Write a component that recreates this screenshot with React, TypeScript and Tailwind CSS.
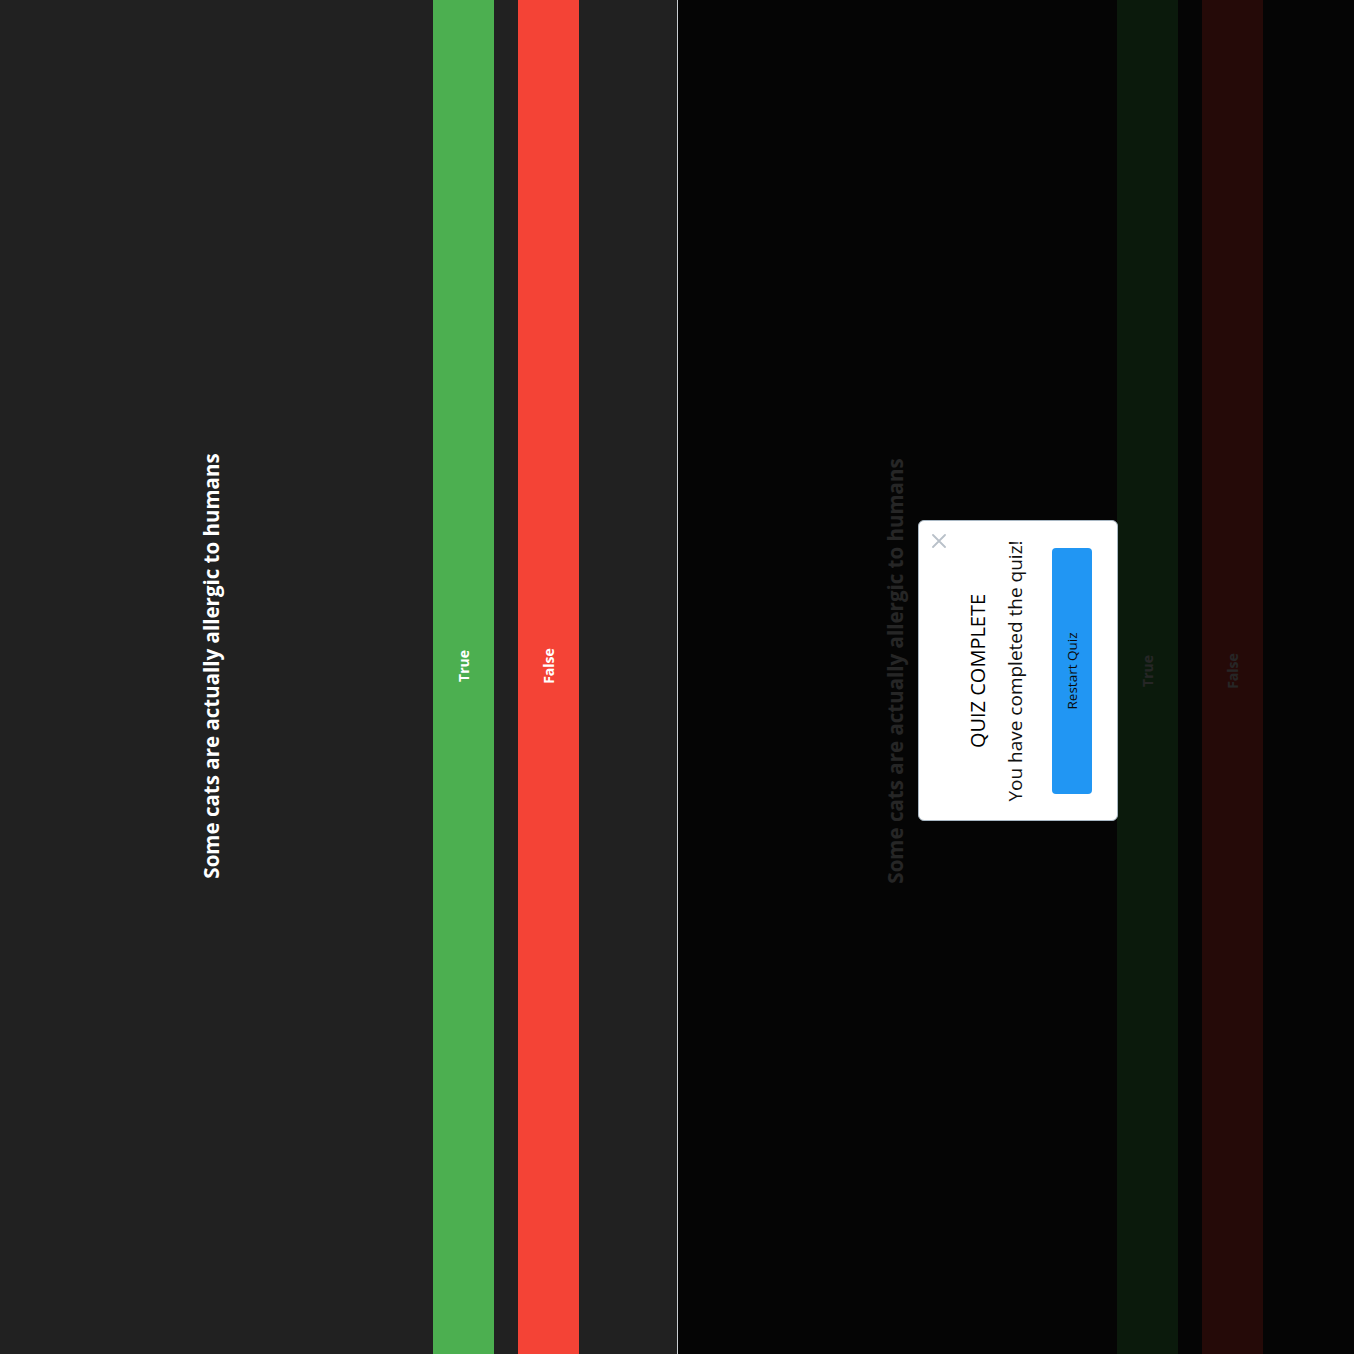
import React from "react";

function QuizPanel({ dim }: { dim?: boolean }) {
  return (
    <div className={dim ? "flex flex-col pt-[203px]" : "flex flex-col pt-[197px]"}>
      <div className={dim ? "pl-[12px] h-[28px] flex items-center justify-center" : "pl-[22px] h-[28px] flex items-center justify-center"}>
        <span className="text-white text-[20.5px] font-bold leading-[28px] whitespace-nowrap">Some cats are actually allergic to humans</span>
      </div>
      <button className={dim ? "mt-[208px] h-[61px] w-full bg-[#4CAF50] pl-[12px] flex items-center justify-center" : "mt-[208px] h-[61px] w-full bg-[#4CAF50] pl-[22px] flex items-center justify-center"}>
        <span className="text-white text-[14px] font-bold">True</span>
      </button>
      <button className={dim ? "mt-[24px] h-[61px] w-full bg-[#F44336] pl-[12px] flex items-center justify-center" : "mt-[24px] h-[61px] w-full bg-[#F44336] pl-[22px] flex items-center justify-center"}>
        <span className="text-white text-[14px] font-bold">False</span>
      </button>
    </div>
  );
}

export default function App() {
  return (
    <div className="w-[1354px] h-[1354px] overflow-hidden bg-black" style={{ fontFamily: '"Open Sans", "Noto Sans", sans-serif' }}>
      <div className="w-[1354px] h-[1354px] -rotate-90 flex flex-col">
        <div className="h-[677px] bg-[#212121] overflow-hidden">
          <QuizPanel />
        </div>
        <div className="h-px bg-[#c9cdd1]" />
        <div className="relative h-[676px] bg-[#212121] overflow-hidden">
          <QuizPanel dim />
          <div className="absolute inset-0 bg-black/85 flex items-center justify-center">
            <div className="relative ml-[12px] mt-[4px] w-[301px] h-[200px] bg-white rounded-md border border-[#a9b8c4] flex flex-col items-center">
              <button className="absolute top-[13px] right-[13px] w-[14px] h-[14px] flex items-center justify-center">
                <svg width="14" height="14" viewBox="0 0 14 14">
                  <path d="M1 1 L13 13 M13 1 L1 13" stroke="#b9c1c9" strokeWidth="1.8" strokeLinecap="round" />
                </svg>
              </button>
              <h2 className="mt-[45px] text-[20px] leading-[28px] font-medium text-black whitespace-nowrap">QUIZ COMPLETE</h2>
              <p className="mt-[10px] text-[19px] leading-[26px] text-[#111] whitespace-nowrap">You have completed the quiz!</p>
              <button className="mt-[24px] w-[246px] h-[40px] rounded bg-[#2196F3] text-[13.5px] text-[#0a0a0a]">Restart Quiz</button>
            </div>
          </div>
        </div>
      </div>
    </div>
  );
}
